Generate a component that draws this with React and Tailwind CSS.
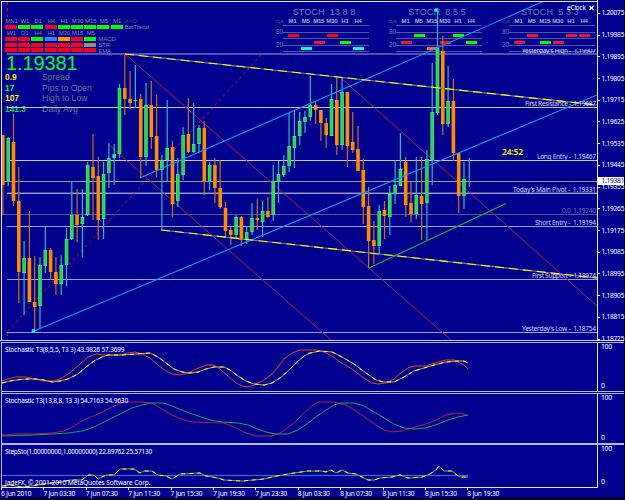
import clsx from "clsx";

// [kind, open/close top, bottom, wick top, wick bottom]
const CANDLES = [
  ["d", 135, 185, 135, 215], ["u", 138, 181, 137, 186], ["d", 142, 201, 114, 206],
  ["d", 201, 272, 167, 303], ["u", 258, 273, 241, 315], ["d", 258, 302, 211, 302],
  ["d", 302, 307, 256, 329], ["u", 265, 306, 257, 329], ["u", 250, 266, 227, 273],
  ["d", 250, 272, 248, 279], ["d", 272, 284, 257, 295], ["u", 265, 284, 255, 295],
  ["u", 239, 265, 228, 286], ["u", 215, 239, 181, 240], ["d", 215, 225, 189, 242],
  ["u", 217, 224, 189, 257], ["u", 165, 215, 162, 216], ["d", 167, 178, 134, 220],
  ["d", 176, 220, 157, 240], ["u", 174, 219, 162, 239], ["u", 158, 173, 143, 188],
  ["u", 154, 158, 144, 185], ["u", 88, 154, 84, 158], ["d", 88, 99, 54, 115],
  ["d", 99, 103, 71, 109], ["u", 100, 101, 65, 108], ["d", 99, 157, 94, 178],
  ["u", 105, 157, 83, 166], ["d", 105, 137, 81, 149], ["d", 136, 170, 95, 177],
  ["u", 160, 170, 155, 229], ["u", 148, 160, 100, 182], ["d", 147, 204, 141, 217],
  ["u", 174, 201, 158, 207], ["u", 135, 175, 127, 180], ["d", 134, 152, 98, 153],
  ["u", 144, 152, 103, 153], ["u", 128, 144, 125, 153], ["d", 128, 181, 121, 195],
  ["u", 165, 181, 162, 190], ["d", 165, 188, 158, 203], ["d", 188, 207, 160, 209],
  ["d", 208, 231, 202, 238], ["d", 230, 235, 227, 245], ["u", 217, 235, 215, 238],
  ["d", 217, 240, 216, 246], ["u", 232, 240, 226, 244], ["u", 218, 232, 203, 235],
  ["d", 218, 220, 199, 230], ["u", 211, 222, 201, 237], ["d", 211, 217, 197, 218],
  ["u", 181, 215, 165, 221], ["u", 174, 182, 161, 203], ["u", 166, 175, 155, 177],
  ["u", 146, 166, 113, 172], ["u", 136, 148, 110, 168], ["u", 121, 136, 112, 145],
  ["u", 117, 122, 111, 133], ["u", 105, 117, 76, 121], ["d", 105, 110, 101, 124],
  ["d", 110, 123, 110, 141], ["d", 123, 135, 118, 148], ["u", 99, 136, 84, 136],
  ["d", 100, 145, 77, 155], ["u", 92, 145, 77, 150], ["d", 92, 146, 92, 167],
  ["d", 142, 150, 112, 153], ["d", 149, 171, 126, 171], ["d", 170, 207, 159, 224],
  ["d", 206, 241, 187, 268], ["d", 240, 246, 221, 264], ["u", 211, 246, 205, 254],
  ["d", 210, 216, 201, 239], ["u", 194, 217, 186, 235], ["u", 185, 194, 160, 204],
  ["u", 169, 186, 133, 186], ["d", 162, 205, 157, 217], ["d", 203, 214, 182, 222],
  ["u", 195, 214, 157, 219], ["d", 196, 204, 157, 240], ["u", 159, 203, 150, 240],
  ["u", 112, 160, 63, 185], ["u", 48, 113, 8, 115], ["d", 51, 124, 36, 135],
  ["u", 101, 124, 66, 127], ["d", 101, 153, 79, 161], ["d", 153, 196, 153, 213],
  ["u", 179, 196, 162, 209], ["u", 180, 181, 158, 187],
];

const LEVELS = [
  { y: 107, label: "First Resistance -\u00a0\u00a01.19687", x: 525, w: 71 },
  { y: 160, label: "Long Entry -\u00a0\u00a01.19467", x: 537, w: 59 },
  { y: 193, label: "Today's Main Pivot -\u00a0\u00a01.19331", x: 513, w: 83, dim: true },
  { y: 226, label: "Short Entry -\u00a0\u00a01.19194", x: 535, w: 61, dim: true },
  { y: 279, label: "First Support -\u00a0\u00a01.18974", x: 532, w: 64, dim: true },
  { y: 332, label: "Yesterday's Low -\u00a0\u00a01.18754", x: 522, w: 74, dim: true },
];

const PRICES = [
  "1.20075", "1.19985", "1.19895", "1.19805", "1.19715", "1.19625", "1.19535", "1.19445",
  "1.19355", "1.19265", "1.19175", "1.19085", "1.18995", "1.18905", "1.18815", "1.18725",
];

const TIMES = [
  "6 Jun 2010", "7 Jun 03:30", "7 Jun 07:30", "7 Jun 11:30", "7 Jun 15:30", "7 Jun 19:30",
  "7 Jun 23:30", "8 Jun 03:30", "8 Jun 07:30", "8 Jun 11:30", "8 Jun 15:30", "8 Jun 19:30",
];

const FILL = {
  r: "bg-[#ff0018]",
  c: "bg-[#f01438]",
  g: "bg-[#00ff00]",
  b: "bg-[#1e90ff]",
  o: "bg-[#ff9a00]",
  s: "bg-[#909090]",
  a: "bg-[#00ffff]",
  t: "bg-[#ff6347]",
};

const TREND = [
  { heads: ["MN1", "W1", "D1", "H4", "H1", "M30", "M15", "M5", "M1"], rows: [["rggrggggg", "BarTrend"]], note: "AAD" },
  { heads: ["W1", "D1", "H4", "H1", "M30", "M15", "M5"], rows: [["rrgborg", "MACD"], ["rrrrrrs", "STR"], ["rrrrrrr", "EMA"]] },
];

const STATS = [
  ["0.9", "Spread", "text-[#ffee00]"],
  ["17", "Pips to Open", "text-[#00ff30]"],
  ["107", "High to Low", "text-[#ffee00]"],
  ["141.3", "Daily Avg", "text-[#00d838]"],
];

// each signal: colour + band (0 = upper, 1 = middle, 2 = lower)
const STOCHS = [
  { title: "STOCH\u00a0\u00a013 8 8", bars: ["r0", "a2", "c1", "r0", "g1", "a2"], pos: "left-[276px]" },
  { title: "STOCH\u00a0\u00a08 5 5", bars: ["c1", "g0", "t2", "c1", "g0", "g1"], pos: "left-[389px]" },
  { title: "STOCH\u00a0\u00a05 3 3", bars: ["c1", "c0", "g1", "c1", "c0", "c0"], pos: "left-[502px]" },
];

const BAND = ["mt-[9px]", "mt-[16px]", "mt-[22px]"];

function TrendTable() {
  return (
    <div className="absolute left-[5px] top-[17px] font-['Liberation_Sans',sans-serif] text-[6px] leading-[6px] text-[#8388a0]">
      {TREND.map((t, i) => (
        <div key={i}>
          <div className="flex h-[7px] items-center">
            {t.heads.map((h) => (
              <span key={h} className="w-[13.2px] text-center tracking-[-0.1px]">{h}</span>
            ))}
            {t.note && <span className="ml-[1px] text-[#38405c]">{t.note}</span>}
          </div>
          {t.rows.map(([cells, name]) => (
            <div key={name} className={clsx("flex items-center", i === 0 ? "h-[5px]" : "h-[5.8px]")}>
              {cells.split("").map((c, k) => (
                <span key={k} className="w-[13.2px]">
                  <i className={clsx("block h-[4px] w-[12px]", FILL[c])} />
                </span>
              ))}
              <span className="ml-[1px] tracking-[-0.1px]">{name}</span>
            </div>
          ))}
        </div>
      ))}
    </div>
  );
}

function StochBox({ title, bars, pos }) {
  return (
    <div className={clsx("absolute top-[7px] w-[93px] font-['Liberation_Sans',sans-serif] text-[#7882a8]", pos)}>
      <div className="h-[10px] whitespace-pre pl-[3px] text-center text-[9px] leading-[10px] tracking-[0.1px]">{title}</div>
      <div className="flex h-[8px] items-center text-[6px] leading-[8px]">
        <span className="w-[10px] text-[#4a5068]">cja</span>
        {["M1", "M5", "M15", "M30", "H1", "H4"].map((m) => (
          <span key={m} className="w-[13.1px] text-center font-bold tracking-[-0.2px] text-[#a4b0d0]">{m}</span>
        ))}
      </div>
      <div className="flex h-[28px]">
        <div className="flex w-[7px] shrink-0 flex-col pt-[3px] text-[6.5px] leading-[8px]">
          <span>80</span>
          <span className="mt-[5px]">20</span>
        </div>
        <div className="relative flex w-[86px] pl-[5px]">
          <div className="absolute inset-0 flex flex-col justify-between pb-[1px]">
            {[0, 1, 2, 3, 4].map((n) => (
              <i key={n} className="block h-px bg-[#5054a4]" />
            ))}
          </div>
          {bars.map((b, i) => (
            <span key={i} className="w-[13.1px]">
              <i className={clsx("relative block h-[3px] w-[10.5px]", FILL[b[0]], BAND[b[1]])} />
            </span>
          ))}
        </div>
      </div>
    </div>
  );
}

function PriceChart() {
  return (
    <svg width="597" height="340" viewBox="0 0 597 340" className="absolute left-0 top-0">
      <g shapeRendering="crispEdges">
        <rect x="7" y="53" width="590" height="2" fill="#5250b4" />
        {LEVELS.map((l) => (
          <rect key={l.y} x="7" y={l.y} width="590" height="1" fill={l.dim ? "#a0a0d0" : "#c8c8d8"} />
        ))}
        <rect x="7" y="192" width="590" height="1" fill="#4040a8" />
        <rect x="2" y="181" width="595" height="1" fill="#9c9c78" />
        <rect x="2" y="214" width="595" height="1" fill="#585890" />
      </g>
      <g fill="none" strokeWidth="1">
        <path d="M7.5 2V53M7.5 333V340M8 331L262 54" stroke="#e00030" strokeDasharray="3 3" />
        <path d="M125 54L451 340M341 78L597 306M108 144L331 340" stroke="#b4184c" />
      </g>
      <g>
        {CANDLES.map(([k, top, bot, hi, lo], i) => {
          const x = 2.9 + i * 5.3;
          const up = k === "u";
          const last = i === CANDLES.length - 1;
          return (
            <g key={i}>
              <rect x={x - 0.6} y={hi} width="1.2" height={lo - hi} fill={up ? "#30b8b8" : "#c87018"} />
              {!last && (
                <rect x={x - 1.8} y={top} width="3.6" height={bot - top} fill={up ? "#38e094" : "#ff8c00"} />
              )}
              {!last && up && bot - top > 4 && (
                <rect x={x - 0.9} y={top + 1} width="1.8" height={bot - top - 2} fill="#32d420" />
              )}
            </g>
          );
        })}
      </g>
      <g fill="none" strokeWidth="1.1">
        <path d="M34 331L597 95M140 178L542 2" stroke="#109ce8" />
        <path d="M369 268L506 203.5" stroke="#10c030" />
        <path d="M125 54L597 105M161 230L597 278" stroke="#808070" />
        <path d="M125 54L597 105M161 230L597 278" stroke="#ffff00" strokeDasharray="9 5" />
      </g>
      <circle cx="33.5" cy="331" r="2" fill="#00f0ff" />
      <circle cx="436" cy="10" r="1.8" fill="#00f0ff" />
      <clipPath id="cut"><rect x="515" y="49" width="82" height="5" /></clipPath>
      <g fontFamily="'Noto Sans', sans-serif" fontSize="6.6" fill="#d4d4ec">
        {LEVELS.map((l) => (
          <text key={l.y} x={l.x} y={l.y - 1} textLength={l.w}>{l.label}</text>
        ))}
        <text x="562" y="213" textLength="34" fill="#7878a0">{"0.0\u00a0\u00a01.19240"}</text>
        <text x="522" y="53" textLength="74" clipPath="url(#cut)">{"Yesterday's High -\u00a0\u00a01.19907"}</text>
        <text x="567" y="10" textLength="19" fill="#fff">eClock</text>
        <path d="M589.5 6L593.5 10M593.5 6L589.5 10" stroke="#fff" strokeWidth="1.2" />
      </g>
      <text x="502" y="155" textLength="21" fontFamily="'Noto Sans', sans-serif" fontSize="8.5" fontWeight="600" fill="#ffee00">24:52</text>
    </svg>
  );
}

function AxisTick({ children }) {
  return (
    <div className="flex h-[21.72px] shrink-0 items-center">
      <i className="block h-px w-[2px] bg-white" />
      <span className="ml-[1.5px]">{children}</span>
    </div>
  );
}

function SubPanel({ title, height, lines, footer, spacing = "tracking-[-0.16px]" }) {
  return (
    <div className={clsx("flex", height)}>
      <div className="relative w-[596px] shrink-0 border-r border-[#e8e8ff]">
        <svg width="596" height="100%" className="absolute left-0 top-0" fill="none" strokeWidth="1">
          {lines.map(([color, pts, over]) => (
            <g key={color}>
              <polyline points={pts} stroke={color} />
              {over && <polyline points={pts} stroke={over} strokeDasharray="4 4" />}
            </g>
          ))}
        </svg>
        <div className="relative flex h-full flex-col justify-between pl-[3px] text-[6.5px] leading-[8px]">
          <span className={clsx("pt-[3px]", spacing)}>{title}</span>
          {footer && <span className="tracking-[-0.08px]">{footer}</span>}
        </div>
      </div>
      <div className="flex flex-col justify-between pb-[1px] pl-[3px] leading-[8px] tracking-[-0.3px]">
        <span>100</span>
        <span>0</span>
      </div>
    </div>
  );
}

const S1_RED =
  "0,38 6,36 14,34 24,34 32,36 42,38 52,38 60,35 70,28 78,21 86,14 94,11 102,12 112,12 118,12 126,10 133,9 140,11 148,15 156,22 164,28 170,31 178,32 186,30 194,26 204,22 212,22 218,26 226,33 234,40 240,43 246,44 252,42 262,37 270,31 276,24 282,16 290,10 298,7 314,7 322,9 330,13 338,19 350,26 360,34 370,40 376,41 384,40 392,36 400,29 406,25 412,23 424,23 430,21 436,19 444,17 452,17 456,19 462,22 466,26";
const S1_YEL =
  "0,40 8,38 14,37 24,36 34,36 42,37 50,39 58,38 66,36 76,31 84,24 92,18 100,14 106,12 120,12 134,11 148,10 156,14 164,20 172,26 180,29 188,30 196,29 204,26 212,24 222,24 228,27 236,33 244,38 252,41 262,42 270,40 278,35 286,28 294,20 302,13 308,10 318,8 330,9 340,14 352,21 364,30 374,37 382,39 392,39 402,34 412,28 422,25 432,22 444,19 456,18 462,18 466,20";
const S2_RED =
  "0,41 14,40 30,40 50,39 62,37 72,32 82,26 96,20 110,13 122,8 140,8 150,9 160,15 170,21 182,26 190,28 222,29 232,33 244,39 254,42 270,42 280,38 292,29 302,19 310,12 316,8 332,8 344,11 354,17 364,24 374,31 382,36 390,38 400,37 410,34 424,30 434,26 444,21 454,19 462,20 466,21";
const S2_GRN =
  "0,42 30,41 50,40 66,39 80,37 92,33 104,27 118,20 130,14 140,11 150,9 162,9 170,12 182,17 196,22 208,26 220,28 236,29 246,31 256,35 264,38 274,40 286,40 296,36 306,29 314,23 324,16 332,11 338,9 352,9 362,12 372,18 382,24 392,30 402,34 412,35 424,34 436,30 446,26 456,23 466,21";
const S3_YEL =
  "0,41 8,40 20,42 36,40 48,38 60,37 68,35 80,35 86,30 92,30 96,34 104,30 112,30 118,24 132,24 138,28 142,26 150,26 156,30 164,31 170,34 178,29 198,28 204,31 216,33 222,35 240,36 262,34 270,32 280,30 292,28 306,26 320,26 324,27 329,25 334,28 340,25 346,28 354,29 360,32 366,35 372,35 378,33 390,32 398,30 406,33 420,32 428,29 434,25 437,21 442,26 450,26 456,31 458,32 466,32";

export default function App() {
  return (
    <div className="h-[500px] w-[625px] overflow-hidden bg-black pr-px font-['Noto_Sans',sans-serif] text-white">
      <div className="flex h-[498px] w-[624px] flex-col bg-[#00008f] pt-px">
        <div className="flex h-[340px]">
          <div className="relative -mt-px h-[341px] w-[598px] shrink-0 border-r border-[#e8e8ff]">
            <TrendTable />
            <div className="absolute left-[5px] top-[53px] font-['Liberation_Sans',sans-serif]">
              <div className="h-[19px] pl-[1px] text-[20px] leading-[21px] tracking-[-0.1px] text-[#00ff20]">1.19381</div>
              {STATS.map(([val, name, color]) => (
                <div key={name} className="flex h-[10.5px] items-center text-[8.6px] leading-[10px]">
                  <span className={clsx("w-[37px] text-[8.4px] font-bold", color)}>{val}</span>
                  <span className="text-[#707488]">{name}</span>
                </div>
              ))}
            </div>
            {STOCHS.map((s) => (
              <StochBox key={s.title} {...s} />
            ))}
            <PriceChart />
            <i className="absolute left-px top-px h-[339px] w-[596px] border-l border-t border-[#e8e8ff]" />
          </div>
          <div className="relative flex flex-col pt-[1.5px] text-[6.6px] leading-[8px] tracking-[-0.25px]">
            {PRICES.map((p) => (
              <AxisTick key={p}>{p}</AxisTick>
            ))}
            <span className="absolute left-0 top-[176px] w-[26px] bg-white pl-[3.5px] leading-[8px] text-[#00008f]">1.19381</span>
          </div>
        </div>

        <div className="-mt-px flex h-[147px] flex-col border-t border-[#d0d0f0] text-[6.8px]">
          <div className="ml-px mt-px flex flex-col border-l border-t border-[#b8b8f0]">
            <SubPanel
              title="Stochastic T3(8,5,5, T3 3) 43.9826 57.3699"
              height="h-[48px]"
              lines={[["#f04018", S1_RED], ["#a8a860", S1_YEL, "#ffff20"]]}
            />
            <div className="h-[3px] border-y border-[#b8b8f0]" />
            <SubPanel
              title="Stochastic T3(13,8,8, T3 3) 54.7163 54.9630"
              height="h-[49px]"
              lines={[["#c01848", S2_RED], ["#18a850", S2_GRN]]}
            />
            <div className="h-[2px] bg-[#b8b8f0]" />
            <SubPanel
              title="StepSto(1.00000000,1.00000000) 22.89762 25.57130"
              height="h-[42px]"
              spacing="tracking-[-0.24px]"
              lines={[["#1080e0", "0,30.5 466,30.5"], ["#909060", S3_YEL, "#ffff00"]]}
              footer="JadeFX, © 2001-2010 MetaQuotes Software Corp."
            />
          </div>
        </div>
        <div className="ml-px flex w-[597px] border-t border-[#e8e8ff] text-[6.6px] leading-[8px]">
          {TIMES.map((t) => (
            <div key={t} className="w-[42.4px] shrink-0 whitespace-nowrap">
              <i className="block h-[2px] w-px bg-white" />
              <span className="block tracking-[-0.2px]">{t}</span>
            </div>
          ))}
        </div>
      </div>
    </div>
  );
}
